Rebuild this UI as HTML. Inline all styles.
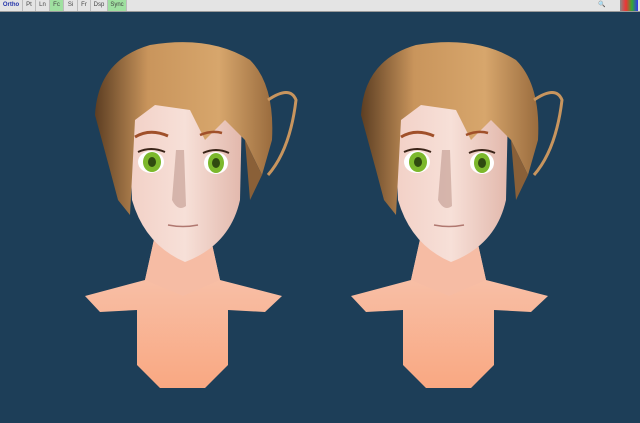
<!DOCTYPE html>
<html><head><style>
html,body{margin:0;padding:0;width:640px;height:423px;overflow:hidden;background:#1d3e58;font-family:"Liberation Sans",sans-serif}
#tb{position:absolute;left:0;top:0;width:640px;height:11px;background:#e4e4e4;border-bottom:1px solid #9a9a9a;font-size:6px;line-height:11px}
#tb span{position:absolute;top:0;height:11px;text-align:center;color:#444;border-right:1px solid #bbb}
.g{background:#9fe0a0}
</style></head><body>
<div id="tb">
<span style="left:0;width:22px;color:#2233aa;font-weight:bold">Ortho</span>
<span style="left:23px;width:12px">Pt</span>
<span style="left:36px;width:13px">Ln</span>
<span class="g" style="left:50px;width:13px">Fc</span>
<span style="left:64px;width:13px">Si</span>
<span style="left:78px;width:12px">Fr</span>
<span style="left:91px;width:16px">Dsp</span>
<span class="g" style="left:108px;width:18px">Sync</span>
<span style="left:592px;width:20px;border:none">&#x1F50D;</span>
<span style="left:620px;width:18px;border:none;background:linear-gradient(90deg,#888,#e33,#3a3,#33e)"></span>
</div>
<svg width="640" height="423" style="position:absolute;left:0;top:0">
<defs>
<linearGradient id="sk" x1="0" y1="0" x2="0" y2="1"><stop offset="0" stop-color="#f8c8b4"/><stop offset="1" stop-color="#f9a882"/></linearGradient>
<linearGradient id="fc" x1="0" y1="0" x2="1" y2="0"><stop offset="0" stop-color="#f2d0c6"/><stop offset="0.5" stop-color="#f7e0d8"/><stop offset="1" stop-color="#e2b8ac"/></linearGradient>
<linearGradient id="hr" x1="0" y1="0" x2="1" y2="0"><stop offset="0" stop-color="#5d3e22"/><stop offset="0.3" stop-color="#c9955c"/><stop offset="0.7" stop-color="#d7a66c"/><stop offset="1" stop-color="#9a6c3e"/></linearGradient>
<g id="h">
<path d="M85 296 L145 280 L155 235 L210 235 L220 280 L282 296 L265 312 L228 310 L228 365 L205 388 L160 388 L137 365 L137 310 L100 312 Z" fill="url(#sk)"/>
<path d="M145 280 L155 235 L210 235 L220 280 L183 296 Z" fill="#f6bca4"/>
<path d="M128 100 Q130 80 180 78 Q236 80 242 110 L240 200 Q230 245 185 262 Q145 245 132 200 Z" fill="url(#fc)"/>
<path d="M176 150 L172 200 Q178 212 186 206 L184 150 Z" fill="#c8a298" opacity="0.7"/>
<path d="M95 115 Q98 60 150 45 Q210 35 250 60 Q275 85 272 140 L262 175 L245 140 L225 120 L205 140 L190 110 L155 105 L135 120 L130 215 L118 200 L110 170 Z" fill="url(#hr)"/>
<path d="M245 140 L250 200 L262 175 Z" fill="#8a6038"/>
<path d="M268 100 Q290 85 296 100 Q290 150 268 175" fill="none" stroke="#c8955e" stroke-width="3"/>
<path d="M135 137 Q150 128 168 136" stroke="#a0502a" stroke-width="3" fill="none"/>
<path d="M200 135 Q212 130 222 133" stroke="#a0502a" stroke-width="2.5" fill="none"/>
<ellipse cx="151" cy="162" rx="13" ry="11" fill="#fff"/>
<ellipse cx="152" cy="162" rx="9" ry="10" fill="#7cb82c"/>
<ellipse cx="152" cy="162" rx="4" ry="5" fill="#2f4a10"/>
<ellipse cx="216" cy="163" rx="12" ry="11" fill="#fff"/>
<ellipse cx="216" cy="163" rx="8" ry="10" fill="#7cb82c"/>
<ellipse cx="216" cy="163" rx="4" ry="5" fill="#2f4a10"/>
<path d="M138 152 Q151 146 165 152" stroke="#3a2418" stroke-width="2" fill="none"/>
<path d="M203 153 Q216 147 229 153" stroke="#3a2418" stroke-width="2" fill="none"/>
<path d="M168 225 Q183 228 198 225" stroke="#b07870" stroke-width="1.5" fill="none"/>
</g>
</defs>
<use href="#h"/>
<use href="#h" x="266"/>
</svg>
</body></html>
